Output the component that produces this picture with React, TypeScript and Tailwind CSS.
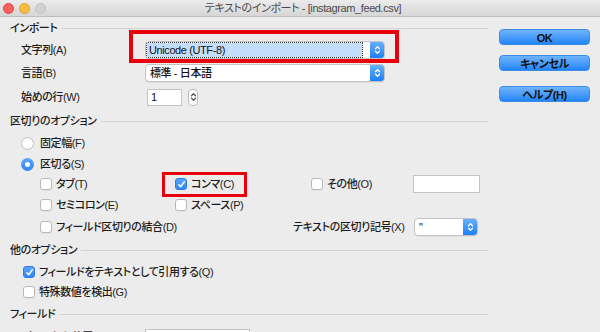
import React from 'react';

const font = { fontFamily: '"Liberation Sans","Noto Sans CJK JP",sans-serif' };

function Chevrons({ color = '#fff' }: { color?: string }) {
  return <svg width="7" height="10" viewBox="0 0 7 10" fill="none" stroke={color} strokeWidth="1.3" strokeLinecap="round" strokeLinejoin="round">
    <path d="M1.5 3.8 L3.5 1.8 L5.5 3.8" />
    <path d="M1.5 6.2 L3.5 8.2 L5.5 6.2" />
  </svg>;
}

function Check() {
  return <svg width="9" height="9" viewBox="0 0 9 9" fill="none" stroke="#fff" strokeWidth="1.5" strokeLinecap="round" strokeLinejoin="round">
    <path d="M1.8 4.8 L3.6 6.8 L7.4 1.8" />
  </svg>;
}

function Box({ on = false }: { on?: boolean }) {
  return on
    ? <span className="w-[12px] h-[12px] rounded-[3px] bg-gradient-to-b from-[#5aa6fa] to-[#2f86f6] border border-[#2b7de6] grid place-items-center shrink-0"><Check /></span>
    : <span className="w-[12px] h-[12px] rounded-[3px] bg-white border border-[#b8b8b8] shadow-[0_1px_0_rgba(0,0,0,0.04)] shrink-0" />;
}

function Radio({ on = false }: { on?: boolean }) {
  return on
    ? <span className="w-[13px] h-[13px] rounded-full bg-gradient-to-b from-[#5aa6fa] to-[#2f86f6] grid place-items-center shrink-0"><span className="w-[5px] h-[5px] rounded-full bg-white" /></span>
    : <span className="w-[13px] h-[13px] rounded-full bg-white border border-[#bdbdbd] shrink-0" />;
}

function Header({ label, h }: { label: string; h: string }) {
  return <div className={`flex items-center gap-[4px] pl-[10px] ${h}`}>
    <span className="text-[11px] text-[#1c1c1c]">{label}</span>
    <span className="flex-1 h-px bg-[#d4d4d4]" />
  </div>;
}

function Select({ text, w, focus = false }: { text: string; w: string; focus?: boolean }) {
  return <div className={`flex ${w} h-[18px] bg-white border border-[#c4c4c4] rounded-[4px] overflow-hidden shadow-[0_1px_0_rgba(0,0,0,0.05)]`}>
    <div className="flex-1 flex items-center pl-[1px] pr-[8px]">
      {focus
        ? <span className="flex-1 h-[14px] flex items-center bg-[#c3ddfa] outline outline-1 outline-dotted outline-[#333] pl-[2px] text-[11px] text-[#111]">{text}</span>
        : <span className="pl-[3px] text-[11px] text-[#111]">{text}</span>}
    </div>
    <div className="w-[14px] bg-gradient-to-b from-[#67b0fb] to-[#1a7ef7] grid place-items-center"><Chevrons /></div>
  </div>;
}

function Btn({ label }: { label: string }) {
  return <div className="h-[16px] rounded-[4px] bg-gradient-to-b from-[#6fb4fb] to-[#1f84f8] border border-[#3a8ae8] grid place-items-center text-[11px] font-bold text-[#111]">{label}</div>;
}

function Opt({ label, on }: { label: string; on?: boolean }) {
  return <div className="flex items-center gap-[4px]"><Box on={on} /><span className="text-[11px] text-[#1c1c1c] whitespace-nowrap">{label}</span></div>;
}

export default function App() {
  return <div className="relative w-[600px] h-[332px] overflow-hidden bg-[#ececec] font-medium tracking-[-0.4px] [font-feature-settings:'palt']" style={font}>
    <div className="relative h-[17px] bg-gradient-to-b from-[#ebebeb] to-[#d6d6d6] border-b border-[#bcbcbc] flex items-center">
      <div className="flex items-center gap-[5px] pl-[3px]">
        <span className="w-[11px] h-[11px] rounded-full bg-[#fc605c] border border-[#e0443e]" />
        <span className="w-[11px] h-[11px] rounded-full bg-[#fdbc40] border border-[#dea123]" />
        <span className="w-[11px] h-[11px] rounded-full bg-[#d2d2d2] border border-[#c2c2c2]" />
      </div>
      <div className="flex-1 text-center text-[11px] font-normal text-[#4a4a4a] pr-[40px]">テキストのインポート - [instagram_feed.csv]</div>
    </div>

    <div className="flex">
      <div className="w-[488px]">
        <Header label="インポート" h="h-[22px]" />
        <div className="flex items-center h-[22px]">
          <span className="w-[145px] pl-[21px] text-[11px] text-[#1c1c1c]">文字列(A)</span>
          <Select text="Unicode (UTF-8)" w="w-[240px]" focus />
        </div>
        <div className="flex items-center h-[24px]">
          <span className="w-[145px] pl-[21px] text-[11px] text-[#1c1c1c]">言語(B)</span>
          <Select text="標準 - 日本語" w="w-[240px]" />
        </div>
        <div className="flex items-center h-[24px]">
          <span className="w-[147px] pl-[21px] text-[11px] text-[#1c1c1c]">始めの行(W)</span>
          <div className="w-[35px] h-[17px] bg-white border border-[#c4c4c4] text-[11px] text-[#111] pl-[3px] leading-[15px]">1</div>
          <div className="ml-[6px] w-[10px] h-[17px] bg-white border border-[#bdbdbd] rounded-[4px] grid place-items-center"><Chevrons color="#555" /></div>
        </div>
        <Header label="区切りのオプション" h="h-[24px]" />
        <div className="flex items-center gap-[6px] h-[21px] pl-[21px]">
          <Radio /><span className="text-[11px] text-[#1c1c1c]">固定幅(F)</span>
        </div>
        <div className="flex items-center gap-[6px] h-[20px] pl-[21px]">
          <Radio on /><span className="text-[11px] text-[#1c1c1c]">区切る(S)</span>
        </div>
        <div className="flex items-center h-[20px] pl-[40px]">
          <div className="w-[135px]"><Opt label="タブ(T)" /></div>
          <div className="w-[136px]"><Opt label="コンマ(C)" on /></div>
          <div className="w-[102px]"><Opt label="その他(O)" /></div>
          <div className="w-[67px] h-[18px] bg-white border border-[#c4c4c4]" />
        </div>
        <div className="flex items-center h-[22px] pl-[40px]">
          <div className="w-[135px]"><Opt label="セミコロン(E)" /></div>
          <div className="w-[136px]"><Opt label="スペース(P)" /></div>
        </div>
        <div className="flex items-center h-[22px] pl-[40px]">
          <div className="w-[253px]"><Opt label="フィールド区切りの結合(D)" /></div>
          <span className="w-[121px] text-[11px] text-[#1c1c1c] whitespace-nowrap">テキストの区切り記号(X)</span>
          <Select text={'"'} w="w-[64px]" />
        </div>
        <Header label="他のオプション" h="h-[24px]" />
        <div className="flex items-center h-[20px] pl-[23px]">
          <Opt label="フィールドをテキストとして引用する(Q)" on />
        </div>
        <div className="flex items-center h-[20px] pl-[23px]">
          <Opt label="特殊数値を検出(G)" />
        </div>
        <Header label="フィールド" h="h-[24px]" />
        <div className="flex items-start h-[20px] pt-[3px]">
          <span className="w-[145px] pl-[21px] text-[11px] text-[#1c1c1c]">列の区切り位置</span>
          <div className="w-[105px] h-[17px] bg-white border border-[#c4c4c4]" />
        </div>
      </div>

      <div className="w-[91px] ml-[11px] pt-[12px] flex flex-col">
        <Btn label="OK" />
        <div className="h-[10px]" />
        <Btn label="キャンセル" />
        <div className="h-[15px]" />
        <Btn label="ヘルプ(H)" />
      </div>
    </div>

    {/* annotation boxes */}
    <div className="absolute left-[129px] top-[30px] w-[270px] h-[33px] border-4 border-[#e8000b]" />
    <div className="absolute left-[162px] top-[172px] w-[85px] h-[25px] border-[3px] border-[#e8000b]" />
  </div>;
}
